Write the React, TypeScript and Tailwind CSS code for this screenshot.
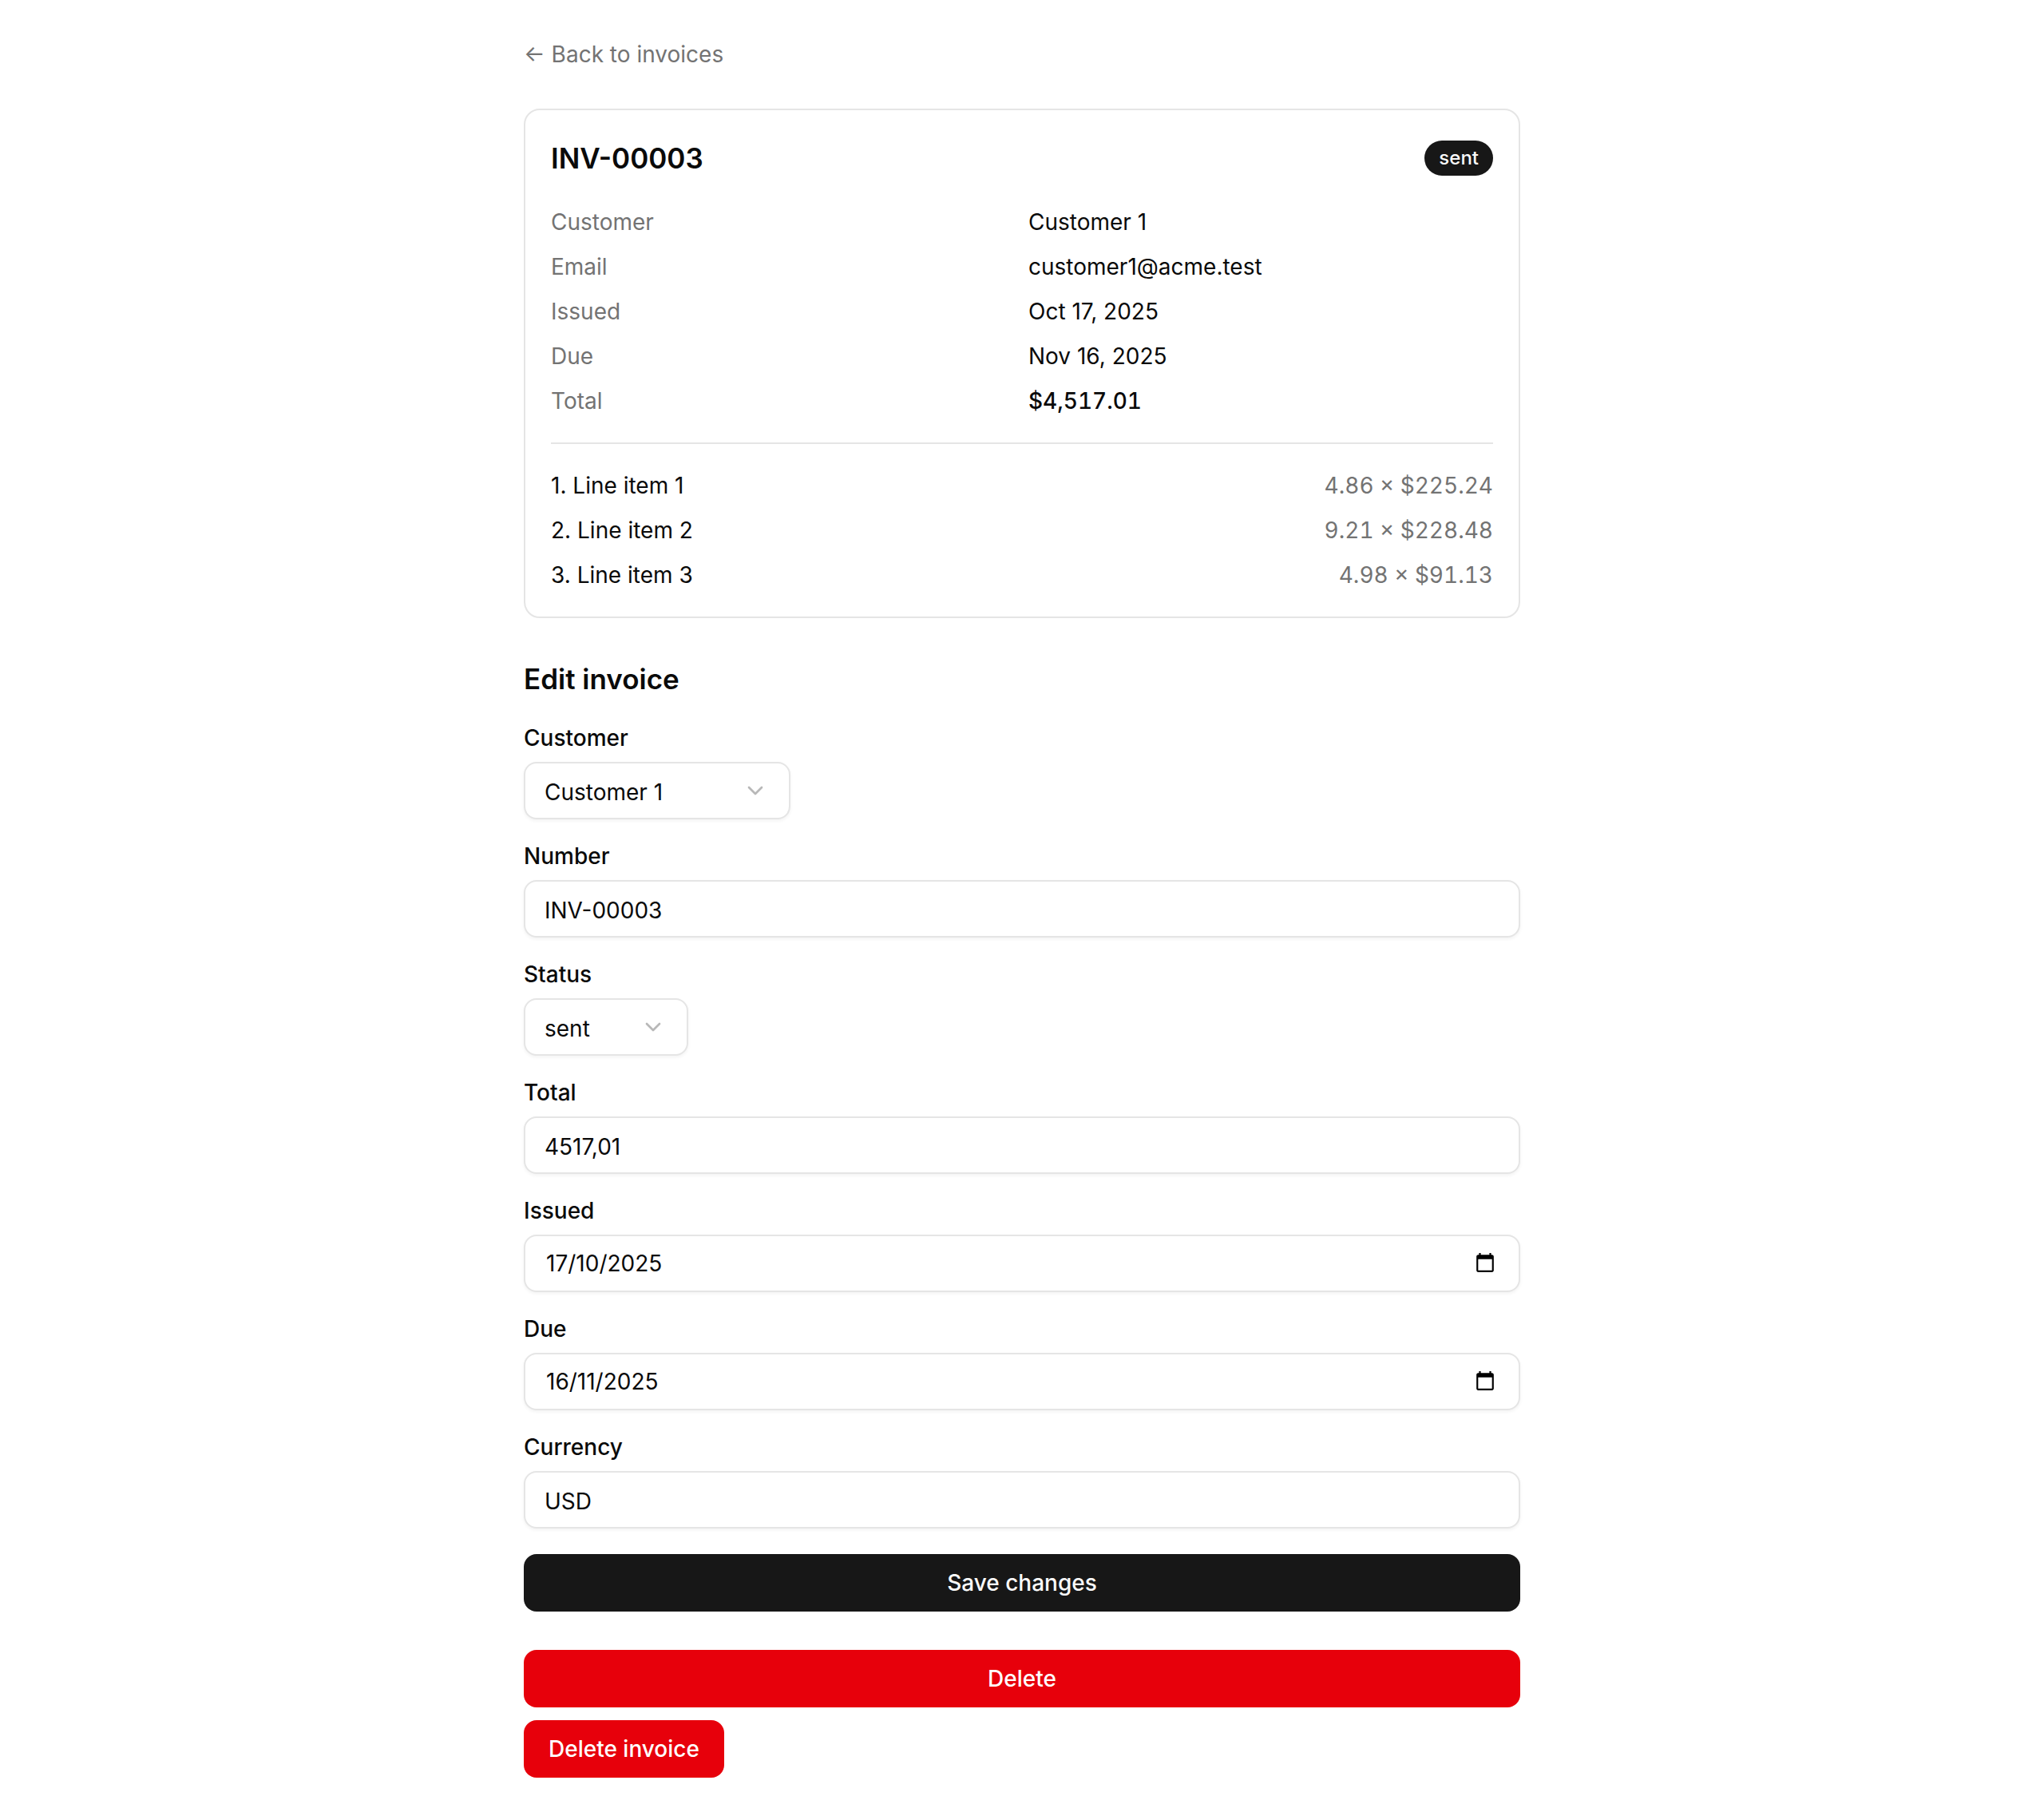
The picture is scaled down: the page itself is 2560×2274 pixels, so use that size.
import { clsx } from 'clsx'
import { ChevronDown } from 'lucide-react'
import { useState } from 'react'
import type { ComponentProps, ReactNode } from 'react'

const CONTROL =
  'h-[72px] rounded-2xl border-2 border-neutral-200 bg-white px-6 text-[28px] leading-[40px] shadow-[0_2px_4px_rgba(0,0,0,0.05)] outline-none focus-visible:border-neutral-400'

const BUTTON =
  'h-[72px] rounded-2xl px-[31px] text-[28px] leading-[40px] font-medium cursor-pointer'

const CUSTOMERS = ['Customer 1', 'Customer 2', 'Customer 3']
const STATUSES = ['draft', 'sent', 'paid', 'overdue']

const DETAILS = [
  { label: 'Customer', value: 'Customer 1' },
  { label: 'Email', value: 'customer1@acme.test' },
  { label: 'Issued', value: 'Oct 17, 2025' },
  { label: 'Due', value: 'Nov 16, 2025' },
  { label: 'Total', value: '$4,517.01', strong: true }
]

const LINE_ITEMS = [
  { name: 'Line item 1', amount: '4.86 × $225.24' },
  { name: 'Line item 2', amount: '9.21 × $228.48' },
  { name: 'Line item 3', amount: '4.98 × $91.13' }
]

function CalendarIcon() {
  return (
    <svg viewBox="0 0 24 24" className="size-[26px]" fill="currentColor" aria-hidden="true">
      <path d="M20 3h-1V1h-2v2H7V1H5v2H4c-1.1 0-2 .9-2 2v16c0 1.1.9 2 2 2h16c1.1 0 2-.9 2-2V5c0-1.1-.9-2-2-2zm0 18H4V8h16v13z" />
    </svg>
  )
}

function Field({ id, label, children }: { id: string; label: string; children: ReactNode }) {
  return (
    <div className="grid gap-4">
      <label htmlFor={id} className="text-[28px] leading-[28px] font-medium">
        {label}
      </label>
      {children}
    </div>
  )
}

function TextInput({ className, ...props }: ComponentProps<'input'>) {
  return <input type="text" className={clsx(CONTROL, 'w-full pt-1', className)} {...props} />
}

function SelectInput({ id, options, defaultValue, className }: {
  id: string
  options: string[]
  defaultValue: string
  className: string
}) {
  return (
    <div className={clsx('relative', className)}>
      <select id={id} name={id} defaultValue={defaultValue} className={clsx(CONTROL, 'w-full appearance-none pt-1 pr-18')}>
        {options.map((option) => (
          <option key={option} value={option}>{option}</option>
        ))}
      </select>
      <ChevronDown className="pointer-events-none absolute top-5 right-7 size-8 text-neutral-500 opacity-50" />
    </div>
  )
}

function DateInput({ id, defaultValue }: { id: string; defaultValue: string }) {
  return (
    <div className={clsx(CONTROL, 'flex items-center justify-between')}>
      <input
        id={id}
        name={id}
        type="text"
        placeholder="dd/mm/yyyy"
        defaultValue={defaultValue}
        className="min-w-0 flex-1 px-0.5 outline-none"
      />
      <button type="button" aria-label="Open calendar" className="mr-[5px] mb-0.5 cursor-pointer text-black">
        <CalendarIcon />
      </button>
    </div>
  )
}

export default function App() {
  const [saved, setSaved] = useState(false)

  return (
    <main className="mx-auto flex max-w-[1344px] flex-col gap-12 bg-white p-12 font-['Inter',sans-serif] text-[28px] leading-[40px] text-neutral-950">
      <a href="#invoices" className="self-start text-neutral-500 hover:underline">
        ← Back to invoices
      </a>

      {/* Invoice summary */}
      <section className="flex flex-col gap-8 rounded-[20px] border-2 border-neutral-200 p-8">
        <div className="flex items-center justify-between">
          <h1 className="text-[35px] leading-[56px] font-semibold">INV-00003</h1>
          <span className="rounded-full bg-neutral-900 px-[18px] py-1.5 text-[24px] leading-[32px] font-medium text-neutral-50">
            sent
          </span>
        </div>

        <dl className="grid gap-4">
          {DETAILS.map(({ label, value, strong }) => (
            <div key={label} className="grid grid-cols-2 gap-4">
              <dt className="text-neutral-500">{label}</dt>
              <dd className={clsx(strong && 'font-medium tabular-nums')}>{value}</dd>
            </div>
          ))}
        </dl>

        <hr className="border-t-2 border-neutral-200" />

        <ul className="grid gap-4">
          {LINE_ITEMS.map((item, index) => (
            <li key={item.name} className="flex justify-between">
              <span>{index + 1}. {item.name}</span>
              <span className="text-neutral-500 tabular-nums">{item.amount}</span>
            </li>
          ))}
        </ul>
      </section>

      {/* Edit form */}
      <section className="grid gap-8">
        <h2 className="text-[35px] leading-[56px] font-semibold">Edit invoice</h2>
        <form
          className="grid gap-8"
          onSubmit={(event) => {
            event.preventDefault()
            setSaved(true)
          }}
          data-saved={saved}
        >
          <Field id="customer" label="Customer">
            <SelectInput id="customer" options={CUSTOMERS} defaultValue="Customer 1" className="w-[334px]" />
          </Field>
          <Field id="number" label="Number">
            <TextInput id="number" name="number" defaultValue="INV-00003" />
          </Field>
          <Field id="status" label="Status">
            <SelectInput id="status" options={STATUSES} defaultValue="sent" className="w-[206px]" />
          </Field>
          <Field id="total" label="Total">
            <TextInput id="total" name="total" inputMode="decimal" defaultValue="4517,01" />
          </Field>
          <Field id="issued" label="Issued">
            <DateInput id="issued" defaultValue="17/10/2025" />
          </Field>
          <Field id="due" label="Due">
            <DateInput id="due" defaultValue="16/11/2025" />
          </Field>
          <Field id="currency" label="Currency">
            <TextInput id="currency" name="currency" defaultValue="USD" />
          </Field>
          <button type="submit" className={clsx(BUTTON, 'bg-neutral-900 text-neutral-50')}>
            Save changes
          </button>
        </form>
      </section>

      <div className="flex flex-col gap-4">
        <button type="button" className={clsx(BUTTON, 'bg-[#e7000b] text-white')}>Delete</button>
        <button type="button" className={clsx(BUTTON, 'self-start bg-[#e7000b] text-white')}>Delete invoice</button>
      </div>
    </main>
  )
}
